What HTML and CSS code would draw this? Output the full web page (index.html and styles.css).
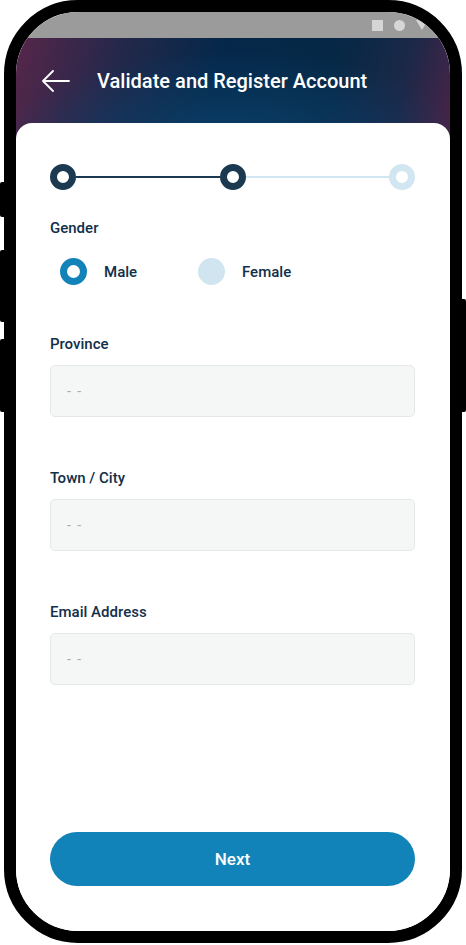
FILE: index.html
```html
<!DOCTYPE html>
<html lang="en">
<head>
  <meta charset="UTF-8" />
  <meta name="viewport" content="width=device-width, initial-scale=1.0" />
  <title>Validate and Register Account</title>
  <link rel="stylesheet" href="styles.css">
</head>
<body>
  <div class="side-btn left btn-1"></div>
  <div class="side-btn left btn-2"></div>
  <div class="side-btn left btn-3"></div>
  <div class="side-btn right btn-4"></div>

  <div class="phone">
    <div class="screen">
      <div class="status-bar">
        <span class="st-square"></span>
        <span class="st-circle"></span>
        <span class="st-triangle"></span>
      </div>

      <div class="appbar">
        <svg class="back" width="28" height="22" viewBox="0 0 28 22">
          <path d="M27 11H1M11 1L1 11l10 10" fill="none" stroke="#fff" stroke-width="1.8" stroke-linecap="round" stroke-linejoin="round"/>
        </svg>
        <h1>Validate and Register Account</h1>
      </div>

      <div class="card">
        <div class="stepper">
          <span class="step done"></span>
          <span class="step-line done"></span>
          <span class="step done"></span>
          <span class="step-line"></span>
          <span class="step"></span>
        </div>

        <div class="label gender-label">Gender</div>
        <div class="radio-row">
          <label class="option">
            <span class="radio checked"></span>
            <span>Male</span>
          </label>
          <label class="option">
            <span class="radio"></span>
            <span>Female</span>
          </label>
        </div>

        <div class="field">
          <div class="label">Province</div>
          <input type="text" placeholder="- -" />
        </div>
        <div class="field">
          <div class="label">Town / City</div>
          <input type="text" placeholder="- -" />
        </div>
        <div class="field">
          <div class="label">Email Address</div>
          <input type="text" placeholder="- -" />
        </div>

        <button class="next">Next</button>
      </div>
    </div>
  </div>
</body>
</html>
```

FILE: styles.css
```css
body {
  margin: 0;
  background: #fff;
  font-family: "Roboto Medium", Roboto, "Liberation Sans", sans-serif;
}
.side-btn {
  position: absolute;
  width: 6px;
  background: #000;
}
.side-btn.left { left: 0; border-radius: 2px 0 0 2px; }
.side-btn.right { left: 460px; border-radius: 0 2px 2px 0; }
.btn-1 { top: 182px; height: 35px; }
.btn-2 { top: 250px; height: 72px; }
.btn-3 { top: 339px; height: 73px; }
.btn-4 { top: 299px; height: 113px; }

.phone {
  position: relative;
  margin-left: 4px;
  width: 458px;
  height: 943px;
  border: 12px solid #000;
  border-radius: 74px;
  overflow: hidden;
  box-sizing: border-box;
  background: #fff;
}
.screen {
  height: 100%;
  display: flex;
  flex-direction: column;
  background:
    radial-gradient(ellipse 55% 90% at 50% 100%, #0b416c 0%, rgba(11,65,108,0) 100%),
    linear-gradient(105deg, #56264a 0%, #22284a 24%, #05284a 45%, #062846 70%, #1c2848 86%, #4e2347 100%);
  background-size: 100% 115px;
  background-position: 0 26px;
  background-repeat: no-repeat;
}
.status-bar {
  height: 26px;
  flex: none;
  background: #9b9b9b;
  display: flex;
  align-items: center;
  justify-content: flex-end;
  gap: 11px;
  padding-right: 22px;
}
.st-square {
  width: 11px;
  height: 11px;
  background: #d6d6d6;
}
.st-circle {
  width: 11px;
  height: 11px;
  border-radius: 50%;
  background: #d6d6d6;
}
.st-triangle {
  width: 0;
  height: 0;
  border-left: 6px solid transparent;
  border-right: 6px solid transparent;
  border-top: 10px solid #d6d6d6;
}
.appbar {
  height: 85px;
  flex: none;
  display: flex;
  align-items: center;
  padding-left: 26px;
}
.back {
  flex: none;
}
.appbar h1 {
  margin: 0 0 0 27px;
  color: #fff;
  font-size: 20px;
  font-weight: 500;
}
.card {
  flex: 1;
  background: #fff;
  border-radius: 16px 16px 0 0;
  padding: 41px 35px 45px 34px;
  display: flex;
  flex-direction: column;
}
.stepper {
  display: flex;
  align-items: center;
  height: 26px;
}
.step {
  width: 26px;
  height: 26px;
  flex: none;
  border-radius: 50%;
  border: 7px solid #d2e6f1;
  background: #fff;
  box-sizing: border-box;
}
.step.done {
  border-color: #1b3a52;
}
.step-line {
  flex: 1;
  height: 2px;
  background: #d2e6f1;
}
.step-line.done {
  background: #1b3a52;
}
.label {
  font-size: 15px;
  line-height: 20px;
  font-weight: 500;
  color: #13304a;
}
.gender-label {
  margin-top: 28px;
}
.radio-row {
  display: flex;
  margin-top: 20px;
  padding-left: 10px;
}
.option {
  width: 138px;
  display: flex;
  align-items: center;
  gap: 17px;
  font-size: 15px;
  font-weight: 500;
  color: #13304a;
}
.radio {
  width: 27px;
  height: 27px;
  border-radius: 50%;
  background: #d0e5f0;
  box-sizing: border-box;
}
.radio.checked {
  background: #fff;
  border: 7px solid #1283b8;
}
.field {
  margin-top: 49px;
}
.field + .field {
  margin-top: 51px;
}
.field input {
  display: block;
  width: 100%;
  height: 52px;
  margin-top: 11px;
  box-sizing: border-box;
  background: #f5f6f6;
  border: 1px solid #e4e8e9;
  border-radius: 5px;
  padding: 0 16px;
  font-family: Roboto, "Liberation Sans", sans-serif;
  font-size: 14px;
  letter-spacing: 1.5px;
}
.field input::placeholder {
  color: #a9adb0;
}
.next {
  margin-top: auto;
  height: 54px;
  width: 100%;
  border: none;
  border-radius: 27px;
  background: #1283b8;
  color: #fff;
  font-family: "Roboto Medium", Roboto, "Liberation Sans", sans-serif;
  font-size: 17px;
  font-weight: 500;
}
```
